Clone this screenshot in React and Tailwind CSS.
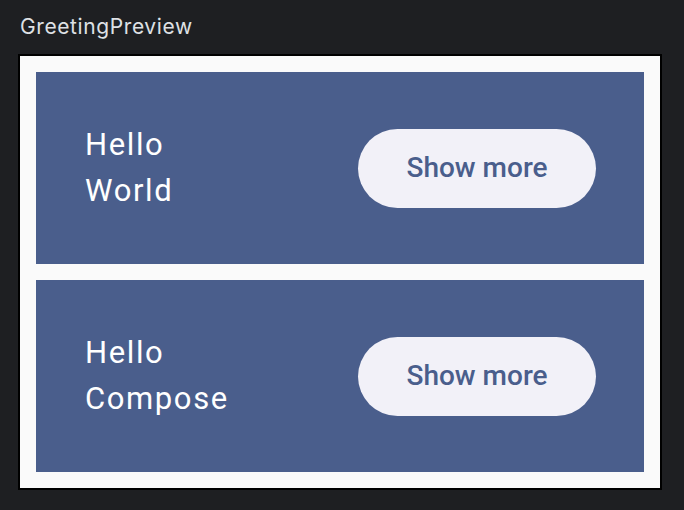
export default function App() {
  const rows = [
    ["Hello", "World"],
    ["Hello", "Compose"],
  ];

  return (
    <div className="h-[510px] w-[684px] bg-[#1e1f22] pl-[18px] pt-[14px] font-['Inter',sans-serif]">
      <div className="h-[26px] pl-[2px] text-[21px] leading-[26px] tracking-[0.6px] text-[#dfe1e5]">GreetingPreview</div>
      <div className="mt-[14px] w-[644px] border-2 border-black bg-[#fafafa] p-4">
        <div className="flex flex-col gap-4">
          {rows.map((r, i) => (
            <div
              key={i}
              className="flex h-[192px] items-center justify-between bg-[#4a5e8c] pl-[49px] pr-[48px]"
            >
              <div className="font-['Roboto',sans-serif] text-[31px] leading-[46px] tracking-[1.6px] text-white">
                <div>{r[0]}</div>
                <div>{r[1]}</div>
              </div>
              <button className="flex h-[79px] w-[238px] items-center justify-center rounded-full bg-[#f2f1f8] font-['Roboto',sans-serif] text-[28px] font-medium text-[#4a5e8c]">
                Show more
              </button>
            </div>
          ))}
        </div>
      </div>
    </div>
  );
}
